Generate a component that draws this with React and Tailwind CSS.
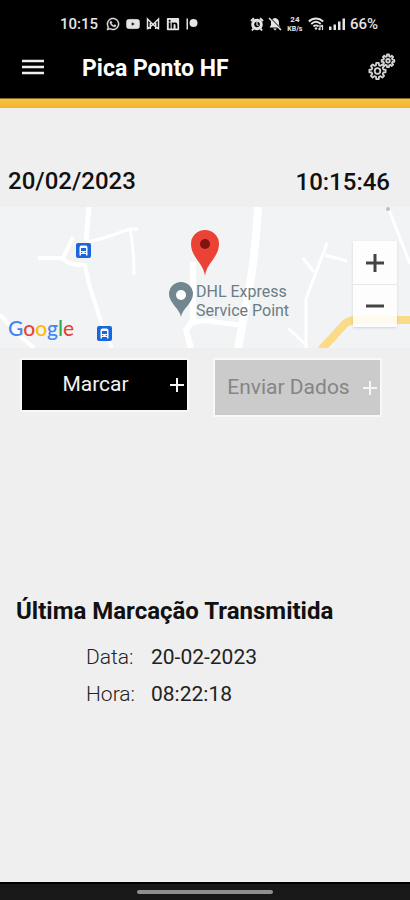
import React, { useState } from 'react';
import { FaWhatsapp, FaYoutube, FaLinkedin } from 'react-icons/fa';

// Outline of a cog wheel with n teeth
const gearPath = (cx, cy, outer, inner, n) => {
  const points = [];
  const step = (Math.PI * 2) / n;
  for (let i = 0; i < n; i++) {
    const a = i * step - Math.PI / 2;
    [[-0.32, inner], [-0.2, outer], [0.2, outer], [0.32, inner]].forEach(([offset, r]) => {
      const x = cx + Math.cos(a + offset * step) * r;
      const y = cy + Math.sin(a + offset * step) * r;
      points.push(`${x.toFixed(2)} ${y.toFixed(2)}`);
    });
  }
  return `M${points.join('L')}Z`;
};

function GearsIcon() {
  return (
    <svg viewBox="0 0 28 28" className="w-7 h-7" fill="none" stroke="#d4d4d4" strokeWidth="1.8" strokeLinejoin="round">
      <path d={gearPath(9.5, 18, 8.2, 6, 8)} />
      <circle cx="9.5" cy="18" r="2.8" />
      <path d={gearPath(20, 7.8, 6.4, 4.6, 8)} />
      <circle cx="20" cy="7.8" r="1.8" />
    </svg>
  );
}

function StatusBar() {
  return (
    <div className="flex items-center justify-between h-12 pl-15 pr-8 text-[#e5e5e5]">
      <div className="flex items-center gap-2">
        <span className="text-[15px] font-medium">10:15</span>
        <div className="flex items-center gap-1.5">
          <FaWhatsapp className="w-3.5 h-3.5" stroke="currentColor" strokeWidth="16" />
          <FaYoutube className="w-3.5 h-3.5" stroke="currentColor" strokeWidth="20" />
          <svg viewBox="0 0 14 14" className="w-3.5 h-3.5" fill="none" stroke="currentColor" strokeWidth="1.5">
            <path d="M1.500 12.500V2L7 7.500 12.500 2v10.500M4.300 4.800v7.200M9.700 4.800v7.200M1.500 12L7 7.500l5.500 4.500" />
          </svg>
          <FaLinkedin className="w-3.5 h-3.5" />
          <svg viewBox="0 0 14 14" className="w-3.5 h-3.5" fill="currentColor">
            <path d="M.5 1.500H2v11H.5z" />
            <circle cx="7.500" cy="6" r="4" />
          </svg>
        </div>
      </div>
      <div className="flex items-center gap-1">
        {/* alarm */}
        <svg viewBox="0 0 14 14" className="w-3.5 h-3.5" fill="none" stroke="currentColor">
          <circle cx="7" cy="7.500" r="4.300" strokeWidth="3" />
          <path d="M1 4l3-2.800M13 4l-3-2.800M3.500 11.500l-1.500 2M10.500 11.500l1.500 2" strokeWidth="2" />
          <path d="M7 5v2.700l1.500 1" strokeWidth="1.200" />
        </svg>
        {/* notifications off */}
        <svg viewBox="0 0 14 14" className="w-3.5 h-3.5" fill="currentColor">
          <path d="M7 1c2.500.5 4 2 4 4.500V8l1.500 2.500h-11L3 8V5.500C3 3 4.500 1.500 7 1zM5 11.500h4L7 13.500z" />
          <path d="M2 1l12 12" stroke="#000" strokeWidth="1.500" />
          <path d="M1 1l12 12" stroke="currentColor" strokeWidth="1.500" />
        </svg>
        <div className="flex flex-col items-center w-4.5 text-[8px] leading-[10px] font-bold">
          <span>24</span>
          <span className="text-[7px] leading-[9px]">KB/s</span>
        </div>
        {/* wifi */}
        <svg viewBox="0 0 16 14" className="w-4 h-3.5" fill="none" stroke="currentColor" strokeWidth="1.800">
          <path d="M.8 4.500C5 .5 11 .5 15.200 4.500M3.200 7c3-2.800 6.600-2.800 9.600 0M5.500 9.500c1.500-1.500 3.500-1.500 5 0" />
          <path d="M8 10l1.500 1.500L8 13l-1.500-1.500z" fill="currentColor" stroke="none" />
          <path d="M12 8v5M10.500 11.500L12 13M14.500 13V8M13 9.500L14.500 8" strokeWidth="1.200" />
        </svg>
        {/* signal */}
        <svg viewBox="0 0 18 14" className="w-4.5 h-3.5" fill="currentColor">
          <path d="M1 9.500h2.500V13H1zM5.500 7.500H8V13H5.500zM10 4.500h2.500V13H10zM14.500 1.500H17V13h-2.500z" />
        </svg>
        <span className="text-[15px] font-medium">66%</span>
      </div>
    </div>
  );
}

function Header() {
  return (
    <header className="bg-black border-b border-[#8a6a20]">
      <StatusBar />
      <div className="flex items-center h-[50px] pl-5 pr-3.5 pb-3">
        <button type="button" aria-label="Menu" className="p-px">
          <svg viewBox="0 0 24 18" className="w-6 h-[18px]" stroke="#eee" strokeWidth="2.5">
            <path d="M1 3h22M1 9h22M1 15h22" />
          </svg>
        </button>
        <h1 className="flex-1 pt-1 pl-9 text-[23px] leading-7 font-bold text-white">Pica Ponto HF</h1>
        <button type="button" aria-label="Definições"><GearsIcon /></button>
      </div>
    </header>
  );
}

function BusStop({ x, y }) {
  return (
    <g transform={`translate(${x} ${y})`}>
      <rect width="15" height="15" rx="2" fill="#1a66dc" />
      <path d="M3.500 12.500V4.500q0-2 2-2h4q2 0 2 2v8H10V11H5v1.500z" fill="#fff" />
      <path d="M5 5h5v3H5z" fill="#1a66dc" />
      <path d="M5 9.500h1.300M8.700 9.500H10" stroke="#1a66dc" />
    </g>
  );
}

function Map() {
  return (
    <section className="relative h-[141px] overflow-hidden bg-[#f1f3f4]">
      <svg viewBox="0 0 410 141" preserveAspectRatio="xMidYMid slice" className="w-full h-full" fill="none">
        <g stroke="#fff" strokeWidth="4" strokeLinejoin="round">
          <path d="M89 0l-3 34" strokeWidth="5" />
          <path d="M87 35q16-3 43-13l8 0M130 22q4 18 4 46" strokeWidth="3" />
          <path d="M73 30L63 51M38 51h24q8 8 23 7l4 19 12 38 11 26" />
          <path d="M0 108l20 21 14 12" />
          <path d="M193 55v58l-7 10 5 18" strokeWidth="6" />
          <path d="M258 0q-2 40-8 77l-12 64" strokeWidth="8" />
          <path d="M187 119q12-8 28-4l24 3" strokeWidth="5" />
          <path d="M327 36L306 92v49M303 51l11 14M325 48l22 6M288 121l18 17" strokeWidth="3" />
          <path d="M388 0l22 57" strokeWidth="3" />
        </g>
        <circle cx="388" cy="2" r="2" fill="#b8bdcb" />
        <path d="M321 143l21-23q5-7 14-7h56" stroke="#fbdb87" strokeWidth="8" />
        <BusStop x={76} y={36} />
        <BusStop x={97} y={119} />
        <path d="M205 69c-1-12-14-19-14-32a14 14 0 0 1 28 0c0 13-13 20-14 32z" fill="#ea4335" />
        <circle cx="205" cy="37" r="5" fill="#811411" />
        <path d="M181 110c-1-8-12-14-12-23a12 12 0 0 1 24 0c0 9-11 15-12 23z" fill="#71868f" />
        <circle cx="181" cy="88" r="5" fill="#fff" />
      </svg>
      <p className="absolute left-1/2 top-[75px] -ml-[9px] text-base leading-[19px] text-[#6b7c85]">
        DHL Express<br />Service Point
      </p>
      <p className="absolute left-2 bottom-1.5 font-[Lato,sans-serif] text-[21px] leading-7 font-medium">
        <span className="text-[#4285f4]">G</span>
        <span className="text-[#ea4335]">o</span>
        <span className="text-[#fbbc05]">o</span>
        <span className="text-[#4285f4]">g</span>
        <span className="text-[#34a853]">l</span>
        <span className="text-[#ea4335]">e</span>
      </p>
      <div className="absolute right-[13px] top-[34px] flex flex-col w-11 bg-white/85 shadow divide-y divide-gray-200">
        <button type="button" aria-label="Aumentar zoom" className="flex items-center justify-center h-11">
          <svg viewBox="0 0 20 20" className="w-5 h-5" stroke="#444" strokeWidth="3"><path d="M1 10h18M10 1v18" /></svg>
        </button>
        <button type="button" aria-label="Diminuir zoom" className="flex items-center justify-center h-[42px]">
          <svg viewBox="0 0 20 20" className="w-5 h-5" stroke="#444" strokeWidth="3"><path d="M1 10h18" /></svg>
        </button>
      </div>
    </section>
  );
}

function PlusIcon() {
  return (
    <svg viewBox="0 0 16 16" className="w-4 h-4 shrink-0" stroke="#f5f5f5" strokeWidth="2">
      <path d="M1 8h14M8 1v14" />
    </svg>
  );
}

export default function App() {
  const [ultima, setUltima] = useState({ data: '20-02-2023', hora: '08:22:18' });

  return (
    <div className="flex flex-col min-h-screen bg-[#efefef] font-[Roboto,sans-serif] text-[#111]">
      <Header />
      <div className="h-[9px] bg-linear-to-b from-[#f3c44d] to-[#f5b51b]" />

      <main className="flex-1">
        <div className="flex justify-between px-2 pt-[58px] pb-2.5 text-2xl leading-[30px] font-medium">
          <span>20/02/2023</span>
          <span className="pr-3 pt-px">10:15:46</span>
        </div>

        <Map />

        <div className="grid grid-cols-2 items-start gap-6 pl-5 pr-7 pt-2.5 text-[21px]">
          <button
            type="button"
            onClick={() => setUltima({ data: '20-02-2023', hora: '10:15:46' })}
            className="flex items-center h-[54px] pr-0.5 border-2 border-[#f8f8f8] bg-black text-[#f2f2f2]"
          >
            <span className="flex-1">Marcar</span>
            <PlusIcon />
          </button>
          <button
            type="button"
            disabled
            className="flex items-center h-[59px] pr-0.5 border-2 border-[#f8f8f8] bg-[#cbcbcb] text-[#858585]"
          >
            <span className="flex-1 whitespace-nowrap">Enviar Dados</span>
            <PlusIcon />
          </button>
        </div>

        <section className="pt-[178px] pl-4">
          <h2 className="text-2xl leading-8 font-bold">Última Marcação Transmitida</h2>
          <dl className="grid grid-cols-[65px_auto] gap-y-[7px] pt-[15px] pl-[70px] text-[21px] leading-[30px] text-[#222]">
            <dt className="font-light">Data:</dt>
            <dd>{ultima.data}</dd>
            <dt className="font-light">Hora:</dt>
            <dd>{ultima.hora}</dd>
          </dl>
        </section>
      </main>

      <footer className="flex justify-center h-[18px] pt-1.5 bg-[#181818] border-t-2 border-black">
        <div className="w-1/3 h-1 rounded-full bg-[#8f8f8f]" />
      </footer>
    </div>
  );
}
